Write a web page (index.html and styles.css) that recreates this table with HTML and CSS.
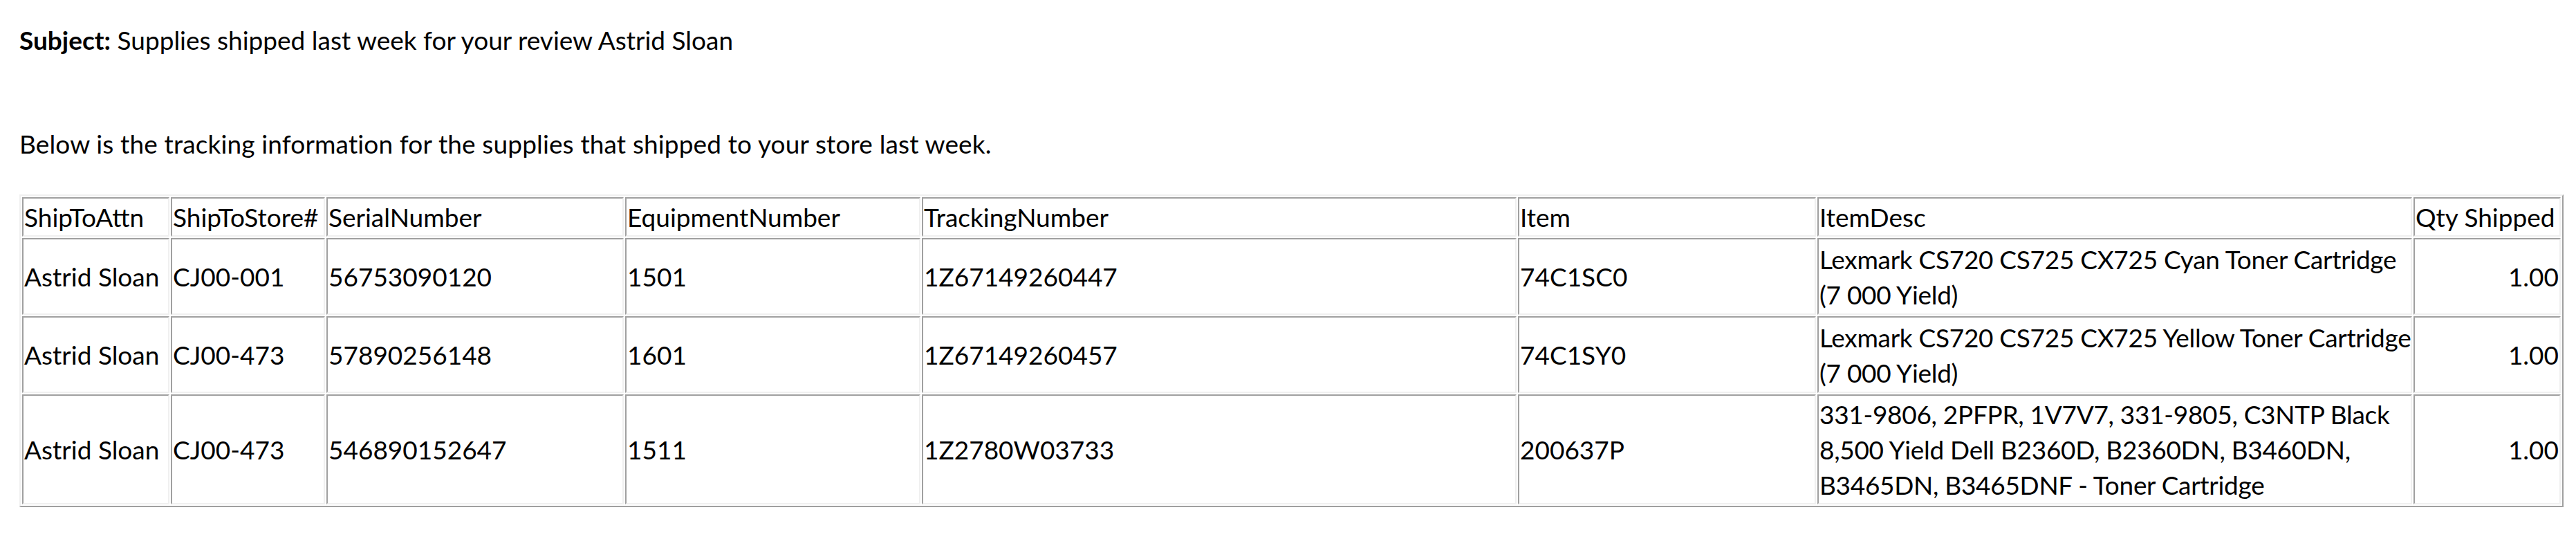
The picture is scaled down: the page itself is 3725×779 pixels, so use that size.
FILE: index.html
```html
<!DOCTYPE html>
<html>
<head>
<meta charset="utf-8">
<title>Supplies shipped</title>
<link rel="stylesheet" href="styles.css">
</head>
<body>
<div class="page">
  <p class="subject"><b>Subject:</b> Supplies shipped last week for your review Astrid Sloan</p>
  <p class="intro">Below is the tracking information for the supplies that shipped to your store last week.</p>
  <table class="ship">
    <thead>
      <tr>
        <th class="c1">ShipToAttn</th>
        <th class="c2">ShipToStore#</th>
        <th class="c3">SerialNumber</th>
        <th class="c4">EquipmentNumber</th>
        <th class="c5">TrackingNumber</th>
        <th class="c6">Item</th>
        <th class="c7">ItemDesc</th>
        <th class="c8">Qty Shipped</th>
      </tr>
    </thead>
    <tbody>
      <tr class="two">
        <td>Astrid Sloan</td>
        <td>CJ00-001</td>
        <td>56753090120</td>
        <td>1501</td>
        <td>1Z67149260447</td>
        <td>74C1SC0</td>
        <td class="desc">Lexmark CS720 CS725 CX725 Cyan Toner Cartridge<br>(7&nbsp;000 Yield)</td>
        <td class="num">1.00</td>
      </tr>
      <tr class="two">
        <td>Astrid Sloan</td>
        <td>CJ00-473</td>
        <td>57890256148</td>
        <td>1601</td>
        <td>1Z67149260457</td>
        <td>74C1SY0</td>
        <td class="desc">Lexmark CS720 CS725 CX725 Yellow Toner Cartridge<br>(7&nbsp;000 Yield)</td>
        <td class="num">1.00</td>
      </tr>
      <tr class="three">
        <td>Astrid Sloan</td>
        <td>CJ00-473</td>
        <td>546890152647</td>
        <td>1511</td>
        <td>1Z2780W03733</td>
        <td>200637P</td>
        <td class="desc">331-9806, 2PFPR, 1V7V7, 331-9805, C3NTP Black<br>8,500 Yield Dell B2360D, B2360DN, B3460DN,<br>B3465DN, B3465DNF - Toner Cartridge</td>
        <td class="num">1.00</td>
      </tr>
    </tbody>
  </table>
</div>
</body>
</html>
```

FILE: styles.css
```css
html, body {
  margin: 0;
  padding: 0;
  background: #ffffff;
}

.page {
  padding: 0 20px 0 28px;
  font-family: Lato, "Open Sans", sans-serif;
  font-size: 37px;
  color: #000000;
}

.subject {
  margin: 0;
  padding-top: 33px;
  line-height: 50px;
}

.subject b {
  font-weight: 700;
}

.intro {
  margin: 100px 0 0 0;
  line-height: 50px;
  letter-spacing: 0.14px;
}

.ship {
  margin-top: 48px;
  width: 100%;
  table-layout: fixed;
  border-collapse: separate;
  border-spacing: 2px;
  border-style: solid;
  border-width: 2px;
  border-color: #f0f0f0 #a0a0a0 #a0a0a0 #f0f0f0;
}

.ship th,
.ship td {
  box-sizing: border-box;
  padding: 1px;
  border-style: solid;
  border-width: 2px;
  border-color: #a0a0a0 #f0f0f0 #f0f0f0 #a0a0a0;
  line-height: 51px;
  font-weight: 400;
  text-align: left;
  vertical-align: middle;
  white-space: nowrap;
  overflow: hidden;
}

.ship .two { height: 111px; }
.ship .three { height: 159px; }

.ship .c1 { width: 213px; }
.ship .c2 { width: 223px; }
.ship .c3 { width: 430px; }
.ship .c4 { width: 427px; }
.ship .c5 { width: 860px; }
.ship .c6 { width: 431px; }
.ship .c7 { width: 860px; }
.ship .c8 { width: 213px; }

.ship .desc {
  letter-spacing: -0.3px;
}

.ship .num {
  text-align: right;
}
```
